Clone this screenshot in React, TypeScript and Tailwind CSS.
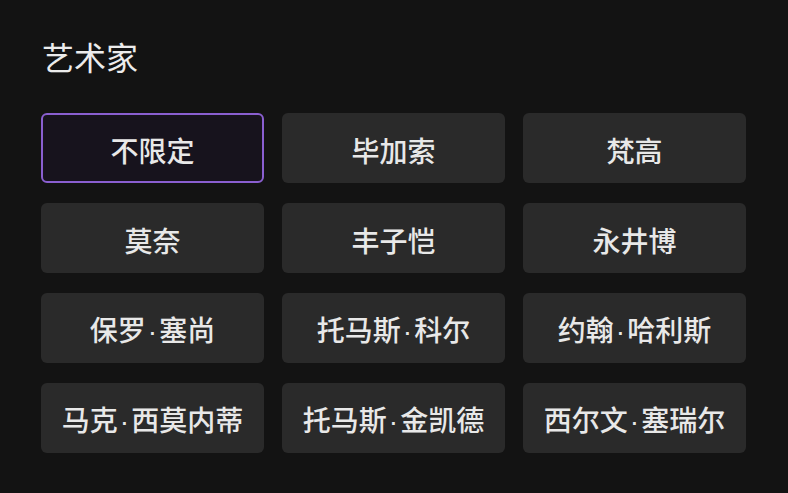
import React from "react";

const items = [
  "不限定",
  "毕加索",
  "梵高",
  "莫奈",
  "丰子恺",
  "永井博",
  "保罗·塞尚",
  "托马斯·科尔",
  "约翰·哈利斯",
  "马克·西莫内蒂",
  "托马斯·金凯德",
  "西尔文·塞瑞尔",
];

function Label({ text }: { text: string }) {
  const parts = text.split("·");
  return (
    <span>
      {parts.map((p, i) => (
        <React.Fragment key={i}>
          {i > 0 && (
            <span className="px-[2px]" style={{ fontFamily: '"Liberation Sans", sans-serif' }}>
              ·
            </span>
          )}
          {p}
        </React.Fragment>
      ))}
    </span>
  );
}

export default function App() {
  return (
    <div
      className="w-[788px] h-[493px] bg-[#131313] overflow-hidden pl-[41px] pt-[35px]"
      style={{ fontFamily: '"Noto Sans CJK SC", "Noto Sans", sans-serif' }}
    >
      <div className="text-[32px] leading-[42px] text-[#ececec] pl-[1px]">艺术家</div>
      <div className="mt-[36px] grid grid-cols-[223px_223px_223px] gap-x-[18px] gap-y-[20px]">
        {items.map((t, i) => (
          <div
            key={t}
            className={
              i === 0
                ? "h-[70px] rounded-[6px] border-2 border-[#8a5fd0] bg-[#17131d] flex items-center justify-center pt-[4px] text-[28px] font-medium text-[#e8e8e8]"
                : "h-[70px] rounded-[6px] bg-[#2a2a2a] flex items-center justify-center pt-[4px] text-[28px] font-medium text-[#e8e8e8]"
            }
          >
            <Label text={t} />
          </div>
        ))}
      </div>
    </div>
  );
}
